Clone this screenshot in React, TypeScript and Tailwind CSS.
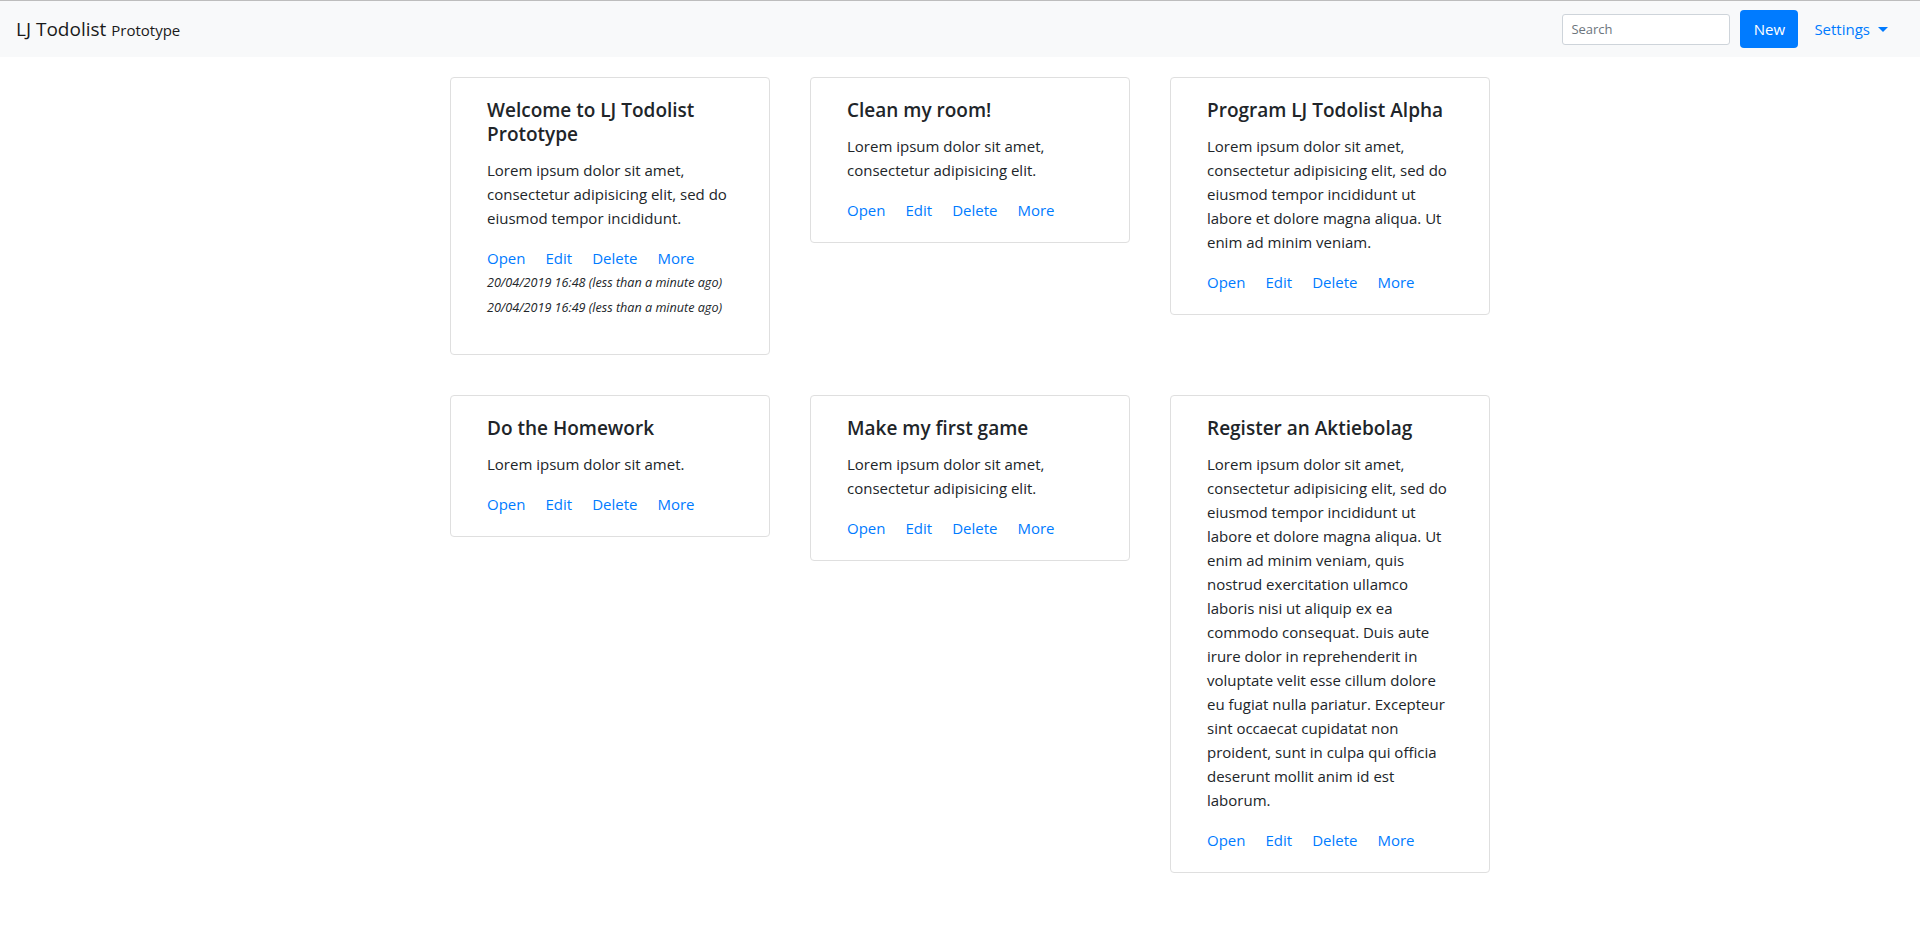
const todos = [
  {
    title: "Welcome to LJ Todolist Prototype",
    body: "Lorem ipsum dolor sit amet, consectetur adipisicing elit, sed do eiusmod tempor incididunt.",
    stamps: [
      "20/04/2019 16:48 (less than a minute ago)",
      "20/04/2019 16:49 (less than a minute ago)",
    ],
  },
  {
    title: "Clean my room!",
    body: "Lorem ipsum dolor sit amet, consectetur adipisicing elit.",
  },
  {
    title: "Program LJ Todolist Alpha",
    body: "Lorem ipsum dolor sit amet, consectetur adipisicing elit, sed do eiusmod tempor incididunt ut labore et dolore magna aliqua. Ut enim ad minim veniam.",
  },
  {
    title: "Do the Homework",
    body: "Lorem ipsum dolor sit amet.",
  },
  {
    title: "Make my first game",
    body: "Lorem ipsum dolor sit amet, consectetur adipisicing elit.",
  },
  {
    title: "Register an Aktiebolag",
    body: "Lorem ipsum dolor sit amet, consectetur adipisicing elit, sed do eiusmod tempor incididunt ut labore et dolore magna aliqua. Ut enim ad minim veniam, quis nostrud exercitation ullamco laboris nisi ut aliquip ex ea commodo consequat. Duis aute irure dolor in reprehenderit in voluptate velit esse cillum dolore eu fugiat nulla pariatur. Excepteur sint occaecat cupidatat non proident, sunt in culpa qui officia deserunt mollit anim id est laborum.",
  },
];

function TodoCard({ title, body, stamps }: { title: string; body: string; stamps?: string[] }) {
  return (
    <div className="border border-[#dfdfdf] rounded-[4px] bg-white px-[36px] py-5">
      <h5 className="text-[19px] font-semibold leading-6 mb-3 text-[#212529]">{title}</h5>
      <p className="text-[15px] leading-6 mb-4 text-[#212529]">{body}</p>
      <div className="flex gap-5 text-[15px] leading-6 text-[#007bff]">
        <a href="#">Open</a>
        <a href="#">Edit</a>
        <a href="#">Delete</a>
        <a href="#">More</a>
      </div>
      {stamps && (
        <div className="pb-[14px]">
          {stamps.map((s) => (
            <div key={s} className="text-[12.6px] italic leading-[25px] text-[#212529]">
              {s}
            </div>
          ))}
        </div>
      )}
    </div>
  );
}

export default function App() {
  return (
    <div className="min-h-screen bg-white font-['Open_Sans',sans-serif] text-[#212529]">
      {/* Navbar */}
      <nav className="h-[57px] flex items-center justify-between px-4 bg-[#f8f9fa] border-t border-[#bdbdbd]">
        <a href="#" className="text-[19px] leading-[30px] text-[#1a1a1a]">
          LJ Todolist <small className="text-[15px]">Prototype</small>
        </a>
        <div className="flex items-center">
          <input
            placeholder="Search"
            className="w-[168px] h-[31px] px-2 text-[13px] border border-[#ced4da] rounded-[3px] bg-white placeholder:text-[#6c757d] outline-none"
          />
          <button className="ml-[10px] w-[58px] h-[38px] rounded-[4px] bg-[#007bff] text-white text-[15px]">
            New
          </button>
          <a href="#" className="ml-2 pl-2 pr-4 flex items-center gap-2 text-[15px] leading-6 text-[#007bff]">
            Settings
            <span className="w-0 h-0 border-x-[5px] border-x-transparent border-t-[5px] border-t-[#007bff]" />
          </a>
        </div>
      </nav>

      {/* Cards */}
      <div className="w-[1060px] mx-auto pl-5 pt-5 pb-10 grid grid-cols-[320px_320px_320px] gap-10 items-start">
        {todos.map((t) => (
          <TodoCard key={t.title} {...t} />
        ))}
      </div>
    </div>
  );
}
